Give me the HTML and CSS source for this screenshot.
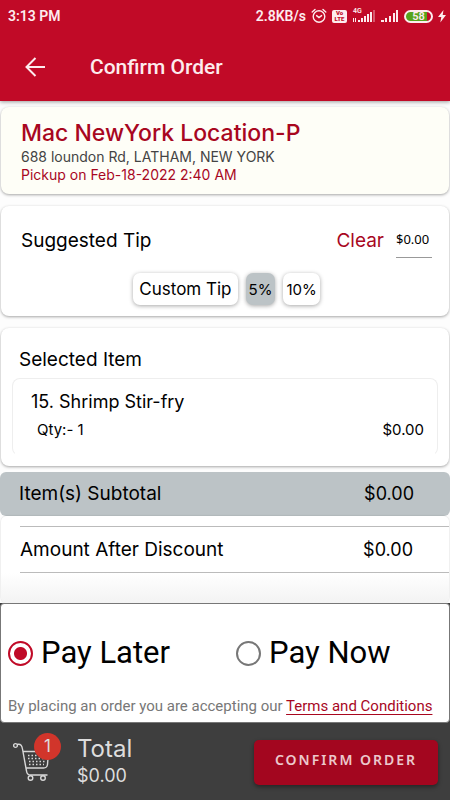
FILE: index.html
```
<!DOCTYPE html>
<html lang="en">
<head>
<meta charset="UTF-8">
<meta name="viewport" content="width=device-width, initial-scale=1">
<title>Confirm Order</title>
<link rel="stylesheet" href="styles.css">
</head>
<body>
<header class="app-bar">
    <div class="status-bar">
        <span>3:13 PM</span>
        <div class="status-icons">
            <span>2.8KB/s</span>
            <svg width="16" height="16" viewBox="0 0 16 16" fill="none" stroke="currentColor" stroke-width="1.4" stroke-linecap="round">
                <circle cx="8" cy="8.5" r="5.8"/>
                <path d="M5.6 7.6 8 9.6l2.6-2M1.2 4 4 1.4M14.8 4 12 1.4"/>
            </svg>
            <span class="volte"><b>Vo</b><b>LTE</b></span>
            <div class="signal">
                <span class="network">4G</span>
                <svg width="24" height="14" viewBox="0 0 24 14" fill="currentColor">
                    <path d="M1 9h1v4H1zM3 9h1v4H3zM6 11h2v2H6zM9 9h2v4H9zM12 7h2v6h-2zM15 5h2v8h-2zM18 3h2v10h-2z"/>
                    <path d="M21 1h2v12h-2z" opacity=".35"/>
                </svg>
            </div>
            <svg width="18" height="14" viewBox="0 0 18 14" fill="currentColor">
                <path d="M0 11h3v2H0zM4 9h2v4H4zM8 7h2v6H8zM12 4h2v9h-2zM15 1h2v12h-2z"/>
            </svg>
            <span class="battery">58</span>
            <svg width="8" height="14" viewBox="0 0 8 14" fill="currentColor">
                <path d="M5.500 1 0 8h3.300L2.300 13.500 8 6H4.700z"/>
            </svg>
        </div>
    </div>
    <div class="toolbar">
        <button class="back" aria-label="Back">
            <svg width="22" height="22" viewBox="0 0 22 22" fill="none" stroke="currentColor" stroke-width="2">
                <path d="M21 11H2.500M11.500 2 2.500 11l9 9"/>
            </svg>
        </button>
        <h1>Confirm Order</h1>
    </div>
</header>

<main>
    <section class="card location">
        <h2>Mac NewYork Location-P</h2>
        <p>688 loundon Rd, LATHAM, NEW YORK</p>
        <p class="pickup">Pickup on Feb-18-2022 2:40 AM</p>
    </section>

    <section class="card tip">
        <div class="tip-head">
            <label for="tip">Suggested Tip</label>
            <button class="clear">Clear</button>
            <input type="text" id="tip" value="$0.00">
        </div>
        <div class="tip-options">
            <button class="custom">Custom Tip</button>
            <button class="selected">5%</button>
            <button>10%</button>
        </div>
    </section>

    <section class="card items">
        <h3>Selected Item</h3>
        <div class="item">
            <h4>15. Shrimp Stir-fry</h4>
            <div class="item-row">
                <span>Qty:- 1</span>
                <span>$0.00</span>
            </div>
        </div>
    </section>

    <section class="summary">
        <div class="subtotal">
            <span>Item(s) Subtotal</span>
            <span class="amount">$0.00</span>
        </div>
        <div class="totals">
            <div class="discount">
                <span>Amount After Discount</span>
                <span class="amount">$0.00</span>
            </div>
        </div>
    </section>
</main>

<footer>
    <div class="payment">
        <div class="pay-options">
            <label><input type="radio" name="pay" checked>Pay Later</label>
            <label><input type="radio" name="pay">Pay Now</label>
        </div>
        <p>By placing an order you are accepting our <a href="#">Terms and Conditions</a></p>
    </div>
    <div class="bottom-bar">
        <div class="cart">
            <svg width="38" height="40" viewBox="0 0 38 40" fill="none" stroke="#d8d8d8" stroke-width="1.400" stroke-linejoin="round">
                <circle cx="2.500" cy="3.500" r="1.900"/>
                <path d="M4 2.500C8 1.500 9 4 9.500 7l4 22c.3 2.500 1.500 4 4 4h17M10 9.500h25.500l-1 13c-.3 2.500-1.500 3.500-4 3.500H13"/>
                <circle cx="17.500" cy="36" r="2.300"/>
                <circle cx="30" cy="36" r="2.300"/>
                <path d="M15 13.500h17M15 16.500h17M16 19.500h16M16 22.500h15" stroke-dasharray="1.500 2"/>
            </svg>
            <span class="badge">1</span>
        </div>
        <div class="total">
            <span class="total-label">Total</span>
            <span>$0.00</span>
        </div>
        <button class="confirm">CONFIRM ORDER</button>
    </div>
</footer>
</body>
</html>
```
FILE: styles.css
```
* {
    box-sizing: border-box;
}
body {
    margin: 0;
    min-height: 100vh;
    display: flex;
    flex-direction: column;
    font-family: Inter, sans-serif;
    font-size: 19px;
    color: #000;
    background-color: #fdfdfd;
}
h1, h2, h3, h4, p {
    margin: 0;
    font-weight: 400;
}
button {
    font-family: inherit;
    color: inherit;
    border: none;
    padding: 0;
    background: none;
    cursor: pointer;
}

/* header */
.app-bar {
    background-color: #c10a27;
    color: #fdecee;
    font-family: Roboto, sans-serif;
    box-shadow: 0 1px 4px rgba(0, 0, 0, 0.4);
}
.status-bar {
    display: flex;
    justify-content: space-between;
    align-items: center;
    height: 32px;
    padding: 0 4px 0 8px;
    font-size: 14px;
    font-weight: 600;
}
.status-icons {
    display: flex;
    align-items: center;
    gap: 5px;
}
.status-icons svg {
    flex-shrink: 0;
}
.volte {
    display: flex;
    flex-direction: column;
    align-items: center;
    width: 15px;
    height: 13px;
    border-radius: 2px;
    background-color: #fdecee;
    color: #c10a27;
    font-size: 6px;
    line-height: 6px;
}
.signal {
    position: relative;
    display: flex;
}
.network {
    position: absolute;
    top: -1px;
    left: 1px;
    font-size: 7px;
    line-height: 6px;
}
.battery {
    width: 29px;
    height: 13px;
    border: 2px solid #fdecee;
    border-radius: 7px;
    background: linear-gradient(90deg, #55a51c 85%, #c10a27 85%);
    font-size: 11px;
    line-height: 9px;
    text-align: center;
}
.toolbar {
    display: flex;
    align-items: center;
    height: 69px;
    padding: 0 24px;
    gap: 44px;
}
.back {
    display: flex;
}
.toolbar h1 {
    font-size: 21px;
    font-weight: 500;
}

/* cards */
main {
    flex: 1;
    display: flex;
    flex-direction: column;
    gap: 12px;
    padding: 6px 1px 0;
}
.card {
    background-color: #fff;
    border-radius: 8px;
    box-shadow: 0 1px 3px rgba(0, 0, 0, 0.35);
}
.location {
    padding: 11px 20px 10px;
    background-color: #fefef7;
    font-size: 14px;
    line-height: 18px;
    color: #444;
}
.location h2 {
    font-size: 23px;
    font-weight: 500;
    line-height: 30px;
    color: #a8071f;
}
.location .pickup {
    color: #a8071f;
}
.tip {
    padding: 22px 17px 11px 20px;
}
.tip-head {
    display: flex;
    align-items: flex-start;
    gap: 12px;
    line-height: 26px;
}
.tip-head label {
    flex: 1;
}
.clear {
    color: #a8071f;
    font-size: 19px;
    line-height: 26px;
}
.tip-head input {
    width: 36px;
    height: 30px;
    padding: 0 0 8px;
    border: none;
    border-bottom: 1px solid #999;
    background: none;
    font-family: "Noto Sans", sans-serif;
    font-size: 13px;
}
.tip-options {
    display: flex;
    justify-content: center;
    gap: 8px;
    margin-top: 15px;
}
.tip-options button {
    height: 32px;
    padding: 0 3px;
    border-radius: 7px;
    box-shadow: 0 1px 4px rgba(0, 0, 0, 0.35);
    background-color: #fff;
    font-size: 15px;
}
.tip-options .custom {
    padding: 0 6px;
    font-size: 17px;
}
.tip-options .selected {
    background-color: #bcc3c6;
}
.items {
    padding: 22px 11px 10px;
}
.items h3 {
    padding-left: 7px;
    font-size: 19px;
    line-height: 20px;
}
.item {
    margin-top: 8px;
    padding: 12px 13px 15px 18px;
    border: 1px solid #eee;
    border-bottom-color: #fff;
    border-radius: 8px;
}
.item h4 {
    font-size: 18px;
    line-height: 22px;
}
.item-row {
    display: flex;
    justify-content: space-between;
    margin-top: 7px;
    padding-left: 6px;
    font-size: 15px;
    line-height: 20px;
}

/* summary */
.summary {
    flex: 1;
    display: flex;
    flex-direction: column;
    margin: -6px -1px 0;
}
.subtotal {
    display: flex;
    justify-content: space-between;
    padding: 0 36px 0 19px;
    line-height: 44px;
    border-radius: 6px;
    background-color: #bcc3c6;
}
.amount {
    font-size: 18px;
}
.totals {
    flex: 1;
    margin: 0 1px;
    padding: 10px 0 30px 19px;
    border-radius: 6px;
    background: linear-gradient(#fff 65%, #f3f3f3);
    box-shadow: 0 0 2px rgba(0, 0, 0, 0.2);
}
.discount {
    display: flex;
    justify-content: space-between;
    padding-right: 36px;
    line-height: 45px;
    border-top: 1px solid #bbb;
    border-bottom: 1px solid #bbb;
}

/* payment and bottom bar */
footer {
    background-color: #3e3e3e;
}
.payment {
    padding: 24px 7px 6px;
    border: 1px solid #777;
    border-radius: 4px;
    background-color: #fff;
    font-family: Roboto, sans-serif;
}
.pay-options {
    display: grid;
    grid-template-columns: 228px 1fr;
}
.pay-options label {
    display: flex;
    align-items: center;
    gap: 8px;
    font-size: 31px;
    line-height: 50px;
}
.pay-options input {
    appearance: none;
    width: 25px;
    height: 25px;
    margin: 0;
    border: 2px solid #777;
    border-radius: 50%;
}
.pay-options input:checked {
    border-color: #c00a27;
    background: radial-gradient(circle, #c00a27 6px, #fff 7px);
}
.payment p {
    margin-top: 18px;
    font-size: 15px;
    line-height: 20px;
    color: #777;
}
.payment a {
    color: #a8071f;
    text-underline-offset: 3px;
}
.bottom-bar {
    display: flex;
    align-items: center;
    height: 78px;
    padding: 0 12px 0 13px;
    color: #ddd;
}
.cart {
    position: relative;
    display: flex;
    width: 64px;
}
.badge {
    position: absolute;
    top: -9px;
    left: 21px;
    width: 27px;
    height: 27px;
    border-radius: 50%;
    background-color: #d1352b;
    font-size: 17px;
    line-height: 27px;
    text-align: center;
}
.total {
    flex: 1;
    display: flex;
    flex-direction: column;
    font-size: 18px;
    line-height: 27px;
}
.total-label {
    font-size: 24px;
}
.confirm {
    width: 184px;
    height: 45px;
    padding-bottom: 6px;
    border-radius: 5px;
    background-color: #a3061f;
    box-shadow: 0 2px 4px rgba(0, 0, 0, 0.4);
    color: #ecc8cc;
    font-family: "Noto Sans", sans-serif;
    font-size: 14px;
    font-weight: 600;
    letter-spacing: 2px;
}
```
